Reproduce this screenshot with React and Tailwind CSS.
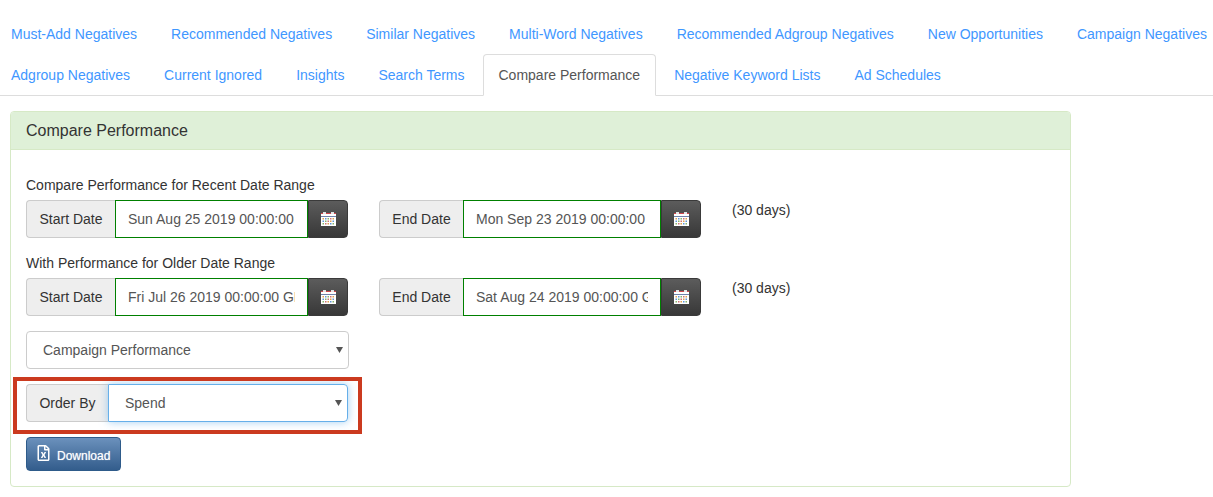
import React from 'react';
import { FaRegFileExcel } from 'react-icons/fa';

const ROW_ONE = [
  'Must-Add Negatives',
  'Recommended Negatives',
  'Similar Negatives',
  'Multi-Word Negatives',
  'Recommended Adgroup Negatives',
  'New Opportunities',
  'Campaign Negatives',
];

const ROW_TWO = [
  'Adgroup Negatives',
  'Current Ignored',
  'Insights',
  'Search Terms',
  'Compare Performance',
  'Negative Keyword Lists',
  'Ad Schedules',
];

const ACTIVE_TAB = 'Compare Performance';

const GRID_COLORS = ['#e0a050', '#5f95d8', '#86b56c', '#cf7474'];

const CalendarIcon = () => (
  <svg width="15" height="14" viewBox="0 0 15 14" className="block">
    <rect x="0" y="1" width="15" height="13" fill="#ffffff" />
    <rect x="0" y="1" width="15" height="1" fill="#d0484e" />
    <rect x="0" y="4" width="15" height="1" fill="#6f82aa" />
    <rect x="2" y="0" width="3" height="2" fill="#e4e4e4" />
    <rect x="10" y="0" width="3" height="2" fill="#e4e4e4" />
    {[1.5, 4, 6.5, 9, 11.5].map((x, i) =>
      [6, 8.5, 11].map((y, j) => (
        <rect
          key={`${i}-${j}`}
          x={x}
          y={y}
          width="1.5"
          height="1.5"
          fill={GRID_COLORS[(i + j) % 4]}
        />
      ))
    )}
  </svg>
);

const Tab = ({ label }) =>
  label === ACTIVE_TAB ? (
    <a className="mr-[2px] h-[42px] rounded-t-[4px] border border-[#ddd] border-b-white bg-white px-[15px] py-[10px] leading-[20px] text-[#555]">
      {label}
    </a>
  ) : (
    <a className="mr-[2px] h-[42px] border border-transparent px-[15px] py-[10px] leading-[20px] text-[#3f97ff]">
      {label}
    </a>
  );

const Addon = ({ label, width }) => (
  <span className={`flex h-[38px] shrink-0 items-center justify-center rounded-l-[4px] border border-r-0 border-[#ccc] bg-[#eee] text-[#333] ${width}`}>
    {label}
  </span>
);

const DateGroup = ({ label, value, addonWidth, inputWidth }) => (
  <div className="flex">
    <Addon label={label} width={addonWidth} />
    <input
      readOnly
      value={value}
      className={`h-[38px] border border-[#008000] bg-white px-[12px] text-[14px] text-[#555] outline-none ${inputWidth}`}
    />
    <button className="flex h-[38px] w-[40px] items-center justify-center rounded-r-[4px] border border-[#3a3a3a] bg-gradient-to-b from-[#5c5c5c] to-[#383838]">
      <CalendarIcon />
    </button>
  </div>
);

const DateRow = ({ title, start, end }) => (
  <div>
    <div className="mb-[5px] h-[20px] leading-[20px] text-[#333]">{title}</div>
    <div className="flex">
      <DateGroup label="Start Date" value={start} addonWidth="w-[89px]" inputWidth="w-[193px]" />
      <div className="ml-[31px]">
        <DateGroup label="End Date" value={end} addonWidth="w-[84px]" inputWidth="w-[198px]" />
      </div>
      <span className="ml-[31px] leading-[20px] text-[#333]">(30 days)</span>
    </div>
  </div>
);

const SelectBox = ({ value, className }) => (
  <div className={`relative h-[38px] ${className}`}>
    <select
      defaultValue={value}
      className="h-full w-full appearance-none bg-transparent pl-[16px] text-[14px] text-[#555] outline-none"
    >
      <option>{value}</option>
    </select>
    <svg width="7" height="6" viewBox="0 0 7 6" className="pointer-events-none absolute right-[5px] top-[15px]">
      <path d="M0 0h7L3.5 6z" fill="#555" />
    </svg>
  </div>
);

const App = () => {
  return (
    <div className="h-[497px] w-[1213px] overflow-hidden bg-white pt-[13px] font-['Liberation_Sans',Arial,sans-serif] text-[14px]">
      <div className="border-b border-[#ddd]">
        <div className="ml-[-5px] flex h-[41px] whitespace-nowrap">
          {ROW_ONE.map((label) => (
            <Tab key={label} label={label} />
          ))}
        </div>
        <div className="mb-[-1px] ml-[-5px] flex h-[42px] whitespace-nowrap">
          {ROW_TWO.map((label) => (
            <Tab key={label} label={label} />
          ))}
        </div>
      </div>

      <div className="ml-[10px] mt-[15px] h-[376px] w-[1061px] rounded-[4px] border border-[#d6e9c6] bg-white">
        <div className="flex h-[38px] items-center rounded-t-[3px] border-b border-[#d6e9c6] bg-[#dff0d8] px-[15px] text-[16px] text-[#333]">
          Compare Performance
        </div>
        <div className="px-[15px] pt-[25px]">
          <DateRow
            title="Compare Performance for Recent Date Range"
            start="Sun Aug 25 2019 00:00:00 GMT-0400"
            end="Mon Sep 23 2019 00:00:00 GMT-0400"
          />
          <div className="mt-[15px]">
            <DateRow
              title="With Performance for Older Date Range"
              start="Fri Jul 26 2019 00:00:00 GMT-0400"
              end="Sat Aug 24 2019 00:00:00 GMT-0400"
            />
          </div>

          <SelectBox
            value="Campaign Performance"
            className="mt-[15px] w-[323px] rounded-[4px] border border-[#ccc]"
          />

          <div className="relative mt-[15px] flex w-[322px]">
            <Addon label="Order By" width="w-[82px]" />
            <SelectBox
              value="Spend"
              className="w-[240px] rounded-r-[4px] border border-[#66afe9] shadow-[0_0_8px_rgba(102,175,233,0.6)]"
            />
            <div className="pointer-events-none absolute left-[-13px] top-[-7px] h-[57px] w-[349px] border-[4px] border-[#cb3a1f]" />
          </div>

          <button className="mt-[15px] flex h-[34px] w-[95px] items-center rounded-[4px] border border-[#2e5b8a] bg-gradient-to-b from-[#6b91bc] to-[#335d8c] pl-[10px] text-[12px] text-white [text-shadow:0_0_1px_rgba(255,255,255,0.7)]">
            <FaRegFileExcel className="mb-[2px] mr-[7px] h-[16px] w-[13px]" />
            <span className="mt-[3px]">Download</span>
          </button>
        </div>
      </div>
    </div>
  );
};

export default App;
